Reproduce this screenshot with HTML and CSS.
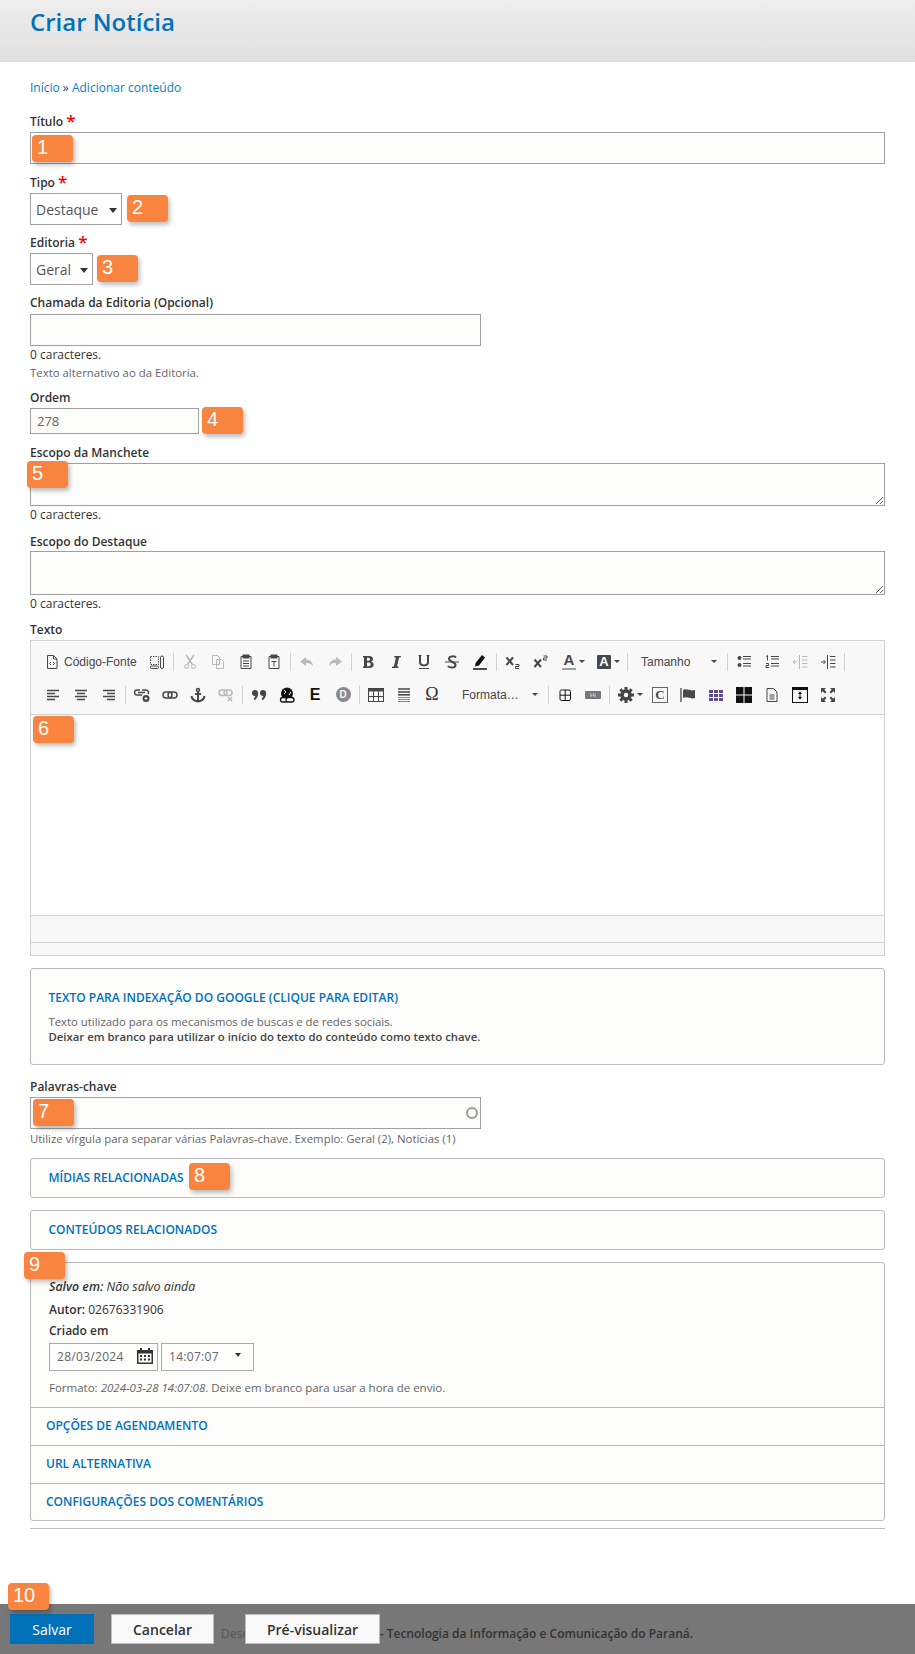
FILE: index.html
```html
<!DOCTYPE html>
<html>
<head>
	<meta charset="utf-8">
	<title>Criar Notícia</title>
	<link rel="stylesheet" href="styles.css">
</head>
<body>
	<header class="page-title"><h1>Criar Notícia</h1></header>

	<main class="content">
		<div class="breadcrumb"><a href="#">Início</a> » <a href="#">Adicionar conteúdo</a></div>

		<div class="field field-titulo">
			<label>Título <span class="req">*</span></label>
			<input type="text" class="text-full">
		</div>
		<div class="field field-tipo">
			<label>Tipo <span class="req">*</span></label>
			<div class="select-wrap"><select><option>Destaque</option></select></div>
		</div>
		<div class="field field-editoria">
			<label>Editoria <span class="req">*</span></label>
			<div class="select-wrap"><select><option>Geral</option></select></div>
		</div>
		<div class="field field-chamada">
			<label>Chamada da Editoria (Opcional)</label>
			<input type="text" class="text-half">
			<div class="count">0 caracteres.</div>
			<div class="help">Texto alternativo ao da Editoria.</div>
		</div>
		<div class="field field-ordem">
			<label>Ordem</label>
			<input type="text" class="text-order" value="278">
		</div>
		<div class="field field-manchete">
			<label>Escopo da Manchete</label>
			<textarea></textarea>
			<div class="count">0 caracteres.</div>
		</div>
		<div class="field field-destaque">
			<label>Escopo do Destaque</label>
			<textarea></textarea>
			<div class="count">0 caracteres.</div>
		</div>

		<div class="field field-texto">
			<label>Texto</label>
			<div class="editor">
				<div class="toolbar">
					<div class="tb-row">
						<span class="tb tb-source">
							<svg class="ico" viewBox="0 0 16 16"><path d="M3.500 1.500h6l3.500 3.500v9.500h-9.500zM9.500 1.500v3.500h3.500"/><path d="M7 8l-1.500 1.500 1.500 1.500M9 8l1.500 1.500-1.500 1.500"/></svg>
							Código-Fonte
						</span>
						<span class="tb"><svg class="ico" viewBox="0 0 16 16"><path stroke-dasharray="1.500 1" d="M1.500 2.500h8v8h-8z"/><rect x="1.500" y="12" width="8" height="2.500" rx="1"/><rect x="11.500" y="2" width="3" height="12.500" rx="1.500"/></svg></span>
						<span class="sep"></span>
						<span class="tb off"><svg class="ico" viewBox="0 0 16 16"><path stroke-width="1.500" d="M4 1l6.500 9.500M12 1l-6.500 9.500"/><circle cx="4.500" cy="12.500" r="2"/><circle cx="11.500" cy="12.500" r="2"/></svg></span>
						<span class="tb off"><svg class="ico" viewBox="0 0 16 16"><path d="M2.500 1.500h5l2 2v7h-7zM6.500 5.500h5l2 2v7h-7z"/></svg></span>
						<span class="tb"><svg class="ico" viewBox="0 0 16 16"><path d="M5 2.500h-2v12h10v-12h-2"/><rect x="5" y="1" width="6" height="3" fill="#474747"/><path d="M5 7h6M5 9.500h6M5 12h6"/></svg></span>
						<span class="tb"><svg class="ico" viewBox="0 0 16 16"><path d="M5 2.500h-2v12h10v-12h-2"/><rect x="5" y="1" width="6" height="3" fill="#474747"/><path d="M5.500 7.500h5M8 7.500v5"/></svg></span>
						<span class="sep"></span>
						<span class="tb off"><svg class="ico" viewBox="0 0 16 16"><path class="solid" d="M7 3l-6 4.500 6 4.500v-3c3 0 5 .5 7 3-.5-4-3-6.500-7-6.500z"/></svg></span>
						<span class="tb off"><svg class="ico" viewBox="0 0 16 16"><path class="solid" d="M9 3l6 4.500-6 4.500v-3c-3 0-5 .5-7 3 .5-4 3-6.500 7-6.500z"/></svg></span>
						<span class="sep"></span>
						<span class="tb"><svg class="ico" viewBox="0 0 16 16"><path class="solid" fill-rule="evenodd" d="M3 2h6c5 0 5 5 2 5.700 4 .8 3.500 6.300-1.500 6.300h-6.500v-1.500h1v-9h-1zM7 3.800v3h1.500c2 0 2-3 0-3zM7 8.600v3.600h2c2.300 0 2.300-3.600 0-3.600z"/></svg></span>
						<span class="tb"><svg class="ico" viewBox="0 0 16 16"><path class="solid" d="M6.500 2h6.500l-.3 1.500h-1.700l-2 9h1.700l-.3 1.500h-6.500l.3-1.500h1.700l2-9h-1.700z"/></svg></span>
						<span class="tb"><svg class="ico" viewBox="0 0 16 16"><path class="thick" d="M4 1.500v6.500c0 4.500 8 4.500 8 0v-6.500"/><path d="M2.500 1.500h3M10.500 1.500h3M3 14.500h10"/></svg></span>
						<span class="tb"><svg class="ico" viewBox="0 0 16 16"><path class="thick" d="M12 3.500c-1-1.500-7-2-7 1.500 0 3 6.500 2.500 6.500 6 0 3.500-6 3-7.500 1"/><path d="M1 8h14"/></svg></span>
						<span class="tb"><svg class="ico" viewBox="0 0 16 16"><path class="solid ink" d="M10 1l3 2.500-6 8-4 1 .7-3.700z"/><path d="M1 15h14" stroke-width="1.500" stroke="#111"/></svg></span>
						<span class="sep"></span>
						<span class="tb"><svg class="ico" viewBox="0 0 16 16"><path class="thick" d="M1.500 3.500l6.500 7.500M8 3.500l-6.500 7.500"/><path d="M10.500 10.500h3.500v2h-3.500v2h3.500"/></svg></span>
						<span class="tb"><svg class="ico" viewBox="0 0 16 16"><path class="thick" d="M1.500 5.500l6.500 7.500M8 5.500l-6.500 7.500"/><path d="M10.500 2h3.500v2h-3.500v2h3.500"/></svg></span>
						<span class="tb tb-drop"><span class="glyph-a">A</span><i class="arrow"></i></span>
						<span class="tb tb-drop"><span class="glyph-bg">A</span><i class="arrow"></i></span>
						<span class="sep"></span>
						<span class="combo combo-size">Tamanho<i class="arrow"></i></span>
						<span class="sep"></span>
						<span class="tb"><svg class="ico" viewBox="0 0 16 16"><circle class="solid" cx="3.500" cy="4" r="2"/><circle class="solid" cx="3.500" cy="11" r="2"/><path d="M7 2.500h8M7 5h8M7 9.500h8M7 12h8"/></svg></span>
						<span class="tb"><svg class="ico" viewBox="0 0 16 16"><path d="M2 2.500l1.500-1v5M2 9.500h2.500v2h-2.500v2h3M7 2.500h8M7 5h8M7 9.500h8M7 12h8"/></svg></span>
						<span class="tb off"><svg class="ico" viewBox="0 0 16 16"><path d="M1 8h4M3 6l-2 2 2 2M7.500 1v14M10 2.500h5.500M10 6h5.500M10 9.500h5.500M10 13h5.500"/></svg></span>
						<span class="tb"><svg class="ico" viewBox="0 0 16 16"><path d="M1 8h4M3.500 6l2 2-2 2M7.500 1v14M10 2.500h5.500M10 6h5.500M10 9.500h5.500M10 13h5.500"/></svg></span>
						<span class="sep"></span>
					</div>
					<div class="tb-row">
						<span class="tb"><svg class="ico" viewBox="0 0 16 16"><path d="M2 3.500h12M2 6.500h8M2 9.500h12M2 12.500h8" stroke-width="1.500"/></svg></span>
						<span class="tb"><svg class="ico" viewBox="0 0 16 16"><path d="M2 3.500h12M4 6.500h8M2 9.500h12M4 12.500h8" stroke-width="1.500"/></svg></span>
						<span class="tb"><svg class="ico" viewBox="0 0 16 16"><path d="M2 3.500h12M6 6.500h8M2 9.500h12M6 12.500h8" stroke-width="1.500"/></svg></span>
						<span class="sep"></span>
						<span class="tb"><svg class="ico" viewBox="0 0 16 16"><path d="M6 3h-3a2.500 2.500 0 0 0 0 5h5M4 5.500h7M8 3h4a2.500 2.500 0 0 1 2 4" stroke-width="1.500"/><circle class="solid" cx="12" cy="11.500" r="3.500"/><path d="M10.500 11.500h3M12 10v3" stroke="#fff"/></svg></span>
						<span class="tb"><svg class="ico" viewBox="0 0 16 16"><rect x="1" y="5" width="9" height="6" rx="3" stroke-width="1.500"/><rect x="6" y="5" width="9" height="6" rx="3" stroke-width="1.500"/></svg></span>
						<span class="tb"><svg class="ico" viewBox="0 0 16 16"><circle cx="8" cy="3" r="1.500" stroke-width="1.500"/><path class="thick" d="M8 4.500v10M5 7h6M1.500 9c.5 3.500 3 5 6.500 5.500 3.500-.5 6-2 6.500-5.500"/></svg></span>
						<span class="tb off"><svg class="ico" viewBox="0 0 16 16"><rect x="1" y="3" width="8" height="5.500" rx="2.700" stroke-width="1.500"/><rect x="6" y="3" width="8" height="5.500" rx="2.700" stroke-width="1.500"/><path d="M10 10l4 4M14 10l-4 4" stroke-width="1.500"/></svg></span>
						<span class="sep"></span>
						<span class="tb"><svg class="ico" viewBox="0 0 16 16"><circle class="solid" cx="4" cy="6" r="3"/><path class="thick" d="M6.200 6c0 3-1.200 5-3 6.500"/><circle class="solid" cx="12" cy="6" r="3"/><path class="thick" d="M14.200 6c0 3-1.200 5-3 6.500"/></svg></span>
						<span class="tb"><svg class="ico ico-black" viewBox="0 0 16 16"><circle class="solid" cx="8" cy="6.500" r="6"/><path d="M5 3l2 2-2 2M10 8l2-3" stroke="#fff"/><rect x="1.500" y="10.500" width="7" height="4.500" rx="2.200" fill="#fff" stroke-width="1.300"/><rect x="7" y="10.500" width="8" height="4.500" rx="2.200" fill="#fff" stroke-width="1.300"/></svg></span>
						<span class="tb tb-letter">E</span>
						<span class="tb"><span class="glyph-d">D</span></span>
						<span class="sep"></span>
						<span class="tb"><svg class="ico" viewBox="0 0 16 16"><rect x=".5" y="1.500" width="15" height="13"/><path class="solid" d="M.5 1.500h15v3h-15z"/><path d="M.5 9.500h15M5.500 4.500v10M10.500 4.500v10"/></svg></span>
						<span class="tb"><svg class="ico" viewBox="0 0 16 16"><path d="M2 2h12M2 5h12" stroke-width="1.300"/><path d="M2 7.800h12" stroke-width="1.600"/><path d="M2 10.500h12M2 12.500h12M2 14.500h12" opacity=".6"/></svg></span>
						<span class="tb tb-omega">Ω</span>
						<span class="combo combo-format">Formata…<i class="arrow"></i></span>
						<span class="sep"></span>
						<span class="tb"><svg class="ico ico-black" viewBox="0 0 16 16"><rect x="3" y="3" width="10.500" height="10.500" rx="1.500"/><path d="M3 8.200h10.500M8.200 3v10.500"/></svg></span>
						<span class="tb"><span class="glyph-hi">Hi</span></span>
						<span class="sep"></span>
						<span class="tb tb-drop tb-gear"><svg class="ico" viewBox="0 0 16 16"><circle cx="8" cy="8" r="4" stroke-width="3.500"/><path stroke-width="3" d="M8 0v3M8 13v3M0 8h3M13 8h3M2.300 2.300l2.200 2.200M11.500 11.500l2.200 2.200M2.300 13.700l2.200-2.200M11.500 4.500l2.200-2.200"/></svg><i class="arrow"></i></span>
						<span class="tb"><span class="glyph-c">C</span></span>
						<span class="tb"><svg class="ico" viewBox="0 0 16 16"><path d="M1 1v14" stroke-width="1.300"/><path class="solid" d="M3 3c4-2 6 1.500 12 0v8c-5 1.500-8-2-12 0z"/></svg></span>
						<span class="tb"><svg class="ico ico-purple" viewBox="0 0 16 16"><path d="M1 3h4v3h-4zM6 3h4v3h-4zM11 3h4v3h-4zM1 7h4v3h-4zM6 7h4v3h-4zM11 7h4v3h-4zM1 11h4v3h-4zM6 11h4v3h-4zM11 11h4v3h-4z"/></svg></span>
						<span class="tb"><svg class="ico ico-black" viewBox="0 0 16 16"><path class="solid" d="M0 0h7.500v7.500h-7.500zM8.500 0h7.500v7.500h-7.500zM0 8.500h7.500v7.500h-7.500zM8.500 8.500h7.500v7.500h-7.500z"/></svg></span>
						<span class="tb"><svg class="ico" viewBox="0 0 16 16"><path d="M3 1.500h6.500l3.500 3.500v9.500h-10zM5.500 8h5M5.500 10h5M5.500 12h5"/></svg></span>
						<span class="tb"><svg class="ico ico-black" viewBox="0 0 16 16"><rect x=".5" y=".5" width="15" height="15"/><path class="solid" d="M0 0h16v3h-16z"/><path d="M8 5v6.500"/><path class="solid" d="M6 7l2-2.500 2 2.500zM6 10l2 2.500 2-2.500z"/></svg></span>
						<span class="tb"><svg class="ico" viewBox="0 0 16 16"><path class="solid" d="M1 1h5l-1.700 1.700 2.200 2.200-1.600 1.600-2.200-2.200-1.700 1.700zM15 1v5l-1.700-1.700-2.200 2.200-1.600-1.600 2.200-2.200-1.700-1.700zM1 15v-5l1.700 1.700 2.200-2.200 1.600 1.600-2.200 2.200 1.700 1.700zM15 15h-5l1.700-1.700-2.200-2.200 1.600-1.600 2.200 2.200 1.700-1.700z"/></svg></span>
					</div>
				</div>
				<div class="editor-body"></div>
				<div class="editor-path"></div>
				<div class="editor-foot"></div>
			</div>
		</div>

		<section class="panel panel-google">
			<h2>Texto para indexação do Google (clique para editar)</h2>
			<p>Texto utilizado para os mecanismos de buscas e de redes sociais.<br><strong>Deixar em branco para utilizar o início do texto do conteúdo como texto chave.</strong></p>
		</section>

		<div class="field field-palavras">
			<label>Palavras-chave</label>
			<div class="autocomplete"><input type="text" class="text-half"><i class="throbber"></i></div>
			<div class="help">Utilize vírgula para separar várias Palavras-chave. Exemplo: Geral (2), Notícias (1)</div>
		</div>

		<section class="panel panel-row"><h2>Mídias relacionadas</h2></section>
		<section class="panel panel-row"><h2>Conteúdos relacionados</h2></section>

		<section class="panel panel-meta">
			<div class="meta-top">
				<div class="meta-saved"><em><strong>Salvo em:</strong> Não salvo ainda</em></div>
				<div class="meta-author"><strong>Autor:</strong> 02676331906</div>
				<div class="meta-label">Criado em</div>
				<div class="date-row">
					<div class="date-box">28/03/2024
						<svg class="cal" viewBox="0 0 16 16"><path fill="#333" fill-rule="evenodd" d="M3 0h2v2h6v-2h2v2h3v14h-16v-14h3zM1.500 5.500v9h13v-9zM3 7h2v2h-2zM7 7h2v2h-2zM11 7h2v2h-2zM3 10.500h2v2h-2zM7 10.500h2v2h-2zM11 10.500h2v2h-2z"/></svg>
					</div>
					<div class="time-box">14:07:07<i class="time-arrow"></i></div>
				</div>
				<div class="help meta-help">Formato: <em>2024-03-28 14:07:08</em>. Deixe em branco para usar a hora de envio.</div>
			</div>
			<h3>Opções de agendamento</h3>
			<h3>URL alternativa</h3>
			<h3>Configurações dos comentários</h3>
		</section>
		<hr class="rule">
	</main>

	<footer class="actions">
		<button class="btn btn-save">Salvar</button>
		<button class="btn btn-cancel">Cancelar</button>
		<div class="foot-text">Desenvolvido pela <strong>CELEPAR - Tecnologia da Informação e Comunicação do Paraná.</strong></div>
		<button class="btn btn-preview">Pré-visualizar</button>
	</footer>

	<div class="badge badge-1">1</div>
	<div class="badge badge-2">2</div>
	<div class="badge badge-3">3</div>
	<div class="badge badge-4">4</div>
	<div class="badge badge-5">5</div>
	<div class="badge badge-6">6</div>
	<div class="badge badge-7">7</div>
	<div class="badge badge-8">8</div>
	<div class="badge badge-9">9</div>
	<div class="badge badge-10">10</div>
</body>
</html>
```
FILE: styles.css
```css
html, body {
	margin: 0;
	padding: 0;
}
body {
	position: relative;
	display: flex;
	flex-direction: column;
	min-height: 100vh;
	font-family: "Open Sans", sans-serif;
	font-size: 13px;
	line-height: 18px;
	color: #333;
	background: #fff;
}
a {
	color: #0a7cc1;
	text-decoration: none;
}
.page-title {
	height: 62px;
	padding: 0 30px;
	box-sizing: border-box;
	background: linear-gradient(#eeeeee, #e0e0e0);
}
.page-title h1 {
	margin: 0;
	padding-top: 4px;
	font-size: 24px;
	line-height: 36px;
	font-weight: 600;
	color: #0072bc;
}
.content {
	padding: 0 30px;
}
.breadcrumb {
	margin-top: 17px;
	margin-bottom: 15px;
	font-size: 12px;
	color: #444;
}

/* form fields */
.field {
	margin-bottom: 8px;
}
.field label {
	display: block;
	height: 18px;
	margin-bottom: 2px;
	font-size: 12px;
	line-height: 20px;
	font-weight: 600;
	color: #333;
}
.req {
	color: #f00;
	font-size: 17px;
	line-height: 12px;
	vertical-align: -1px;
}
.field-titulo {
	margin-bottom: 9px;
}
.field-chamada label {
	margin-bottom: 3px;
}
.field-chamada {
	margin-bottom: 7px;
}
.field-ordem {
	margin-bottom: 9px;
}
.field-manchete textarea {
	height: 43px;
}
.field-destaque {
	margin-bottom: 7px;
}
.field-destaque label {
	margin-bottom: 1px;
}
input[type="text"], textarea {
	display: block;
	box-sizing: border-box;
	margin: 0;
	padding: 0 6px;
	border: 1px solid #a0a0a0;
	background: #fcfcfa;
	font-family: inherit;
	font-size: 13px;
	color: #666;
	border-radius: 0;
	outline: none;
}
.text-full {
	width: 855px;
	height: 32px;
}
.text-half {
	width: 451px;
	height: 32px;
}
.text-order {
	width: 169px;
	height: 26px;
}
textarea {
	width: 855px;
	height: 44px;
}
.select-wrap {
	position: relative;
	width: fit-content;
}
.select-wrap::after {
	content: "";
	position: absolute;
	right: 5px;
	top: 15px;
	border-style: solid;
	border-width: 5px 4px 0 4px;
	border-color: #333 transparent transparent transparent;
}
select {
	display: block;
	appearance: none;
	height: 32px;
	margin: 0;
	padding: 0 0 0 5px;
	border: 1px solid #a0a0a0;
	border-radius: 0;
	background: #fff;
	font-family: inherit;
	font-size: 14px;
	color: #555;
}
.field-tipo select {
	width: 92px;
}
.field-editoria select {
	width: 63px;
}
.count {
	color: #333;
	font-size: 12px;
	height: 18px;
}
.field-chamada .count {
	height: 17px;
}
.help {
	font-size: 11.4px;
	color: #666;
	line-height: 16px;
	margin-top: 2px;
}

/* editor */
.editor {
	border: 1px solid #d1d1d1;
	background: #fff;
}
.toolbar {
	height: 74px;
	box-sizing: border-box;
	padding: 4px 0 0 8px;
	background: #f8f8f8;
	border-bottom: 1px solid #d1d1d1;
}
.tb-row {
	display: flex;
	align-items: center;
	height: 33px;
	color: #474747;
}
.tb {
	display: flex;
	align-items: center;
	justify-content: center;
	width: 28px;
	height: 28px;
	flex: none;
}
.tb.off {
	opacity: .35;
}
.tb-source {
	width: 104px;
	justify-content: flex-start;
	padding-left: 5px;
	box-sizing: border-box;
	gap: 4px;
	font: 12px "Liberation Sans", Arial, sans-serif;
}
.tb-drop {
	width: 35px;
	justify-content: flex-start;
	padding-left: 7px;
	box-sizing: border-box;
}
.tb-gear {
	width: 34px;
	padding-left: 6px;
}
.ico {
	width: 16px;
	height: 16px;
	fill: none;
	stroke: #474747;
	stroke-width: 1;
	flex: none;
}
.ico .solid {
	fill: #474747;
	stroke: none;
}
.ico .ink {
	fill: #111;
}
.ico .thick {
	stroke-width: 2;
}
.ico-black {
	stroke: #111;
}
.ico-black .solid {
	fill: #111;
}
.ico-purple {
	fill: #5f4b8b;
	stroke: none;
}
.sep {
	flex: none;
	width: 1px;
	height: 18px;
	margin: 0 2px;
	background: #d1d1d1;
}
.arrow {
	display: block;
	flex: none;
	margin-left: 3px;
	border-style: solid;
	border-width: 3px 3px 0 3px;
	border-color: #474747 transparent transparent transparent;
}
.combo {
	display: flex;
	align-items: center;
	justify-content: space-between;
	flex: none;
	box-sizing: border-box;
	font: 12px "Liberation Sans", Arial, sans-serif;
	color: #474747;
}
.combo-size {
	width: 95px;
	padding: 0 8px 0 11px;
}
.combo-format {
	width: 100px;
	padding: 0 8px 0 16px;
}
.glyph-a {
	display: block;
	width: 14px;
	height: 15px;
	font: bold 15px/14px "Liberation Sans", Arial, sans-serif;
	text-align: center;
	border-bottom: 2px solid #a0a0a0;
	color: #474747;
}
.glyph-bg {
	display: block;
	width: 14px;
	height: 14px;
	font: bold 13px/14px "Liberation Sans", Arial, sans-serif;
	text-align: center;
	color: #fff;
	background: #474747;
	border-radius: 1px;
}
.tb-letter {
	font: bold 16px "Liberation Sans", Arial, sans-serif;
	color: #111;
}
.glyph-d {
	display: block;
	width: 15px;
	height: 15px;
	border-radius: 50%;
	background: #8a8a8a;
	color: #f8f8f8;
	font: bold 10px/15px "Liberation Sans", Arial, sans-serif;
	text-align: center;
}
.tb-omega {
	font: 18px "Liberation Serif", serif;
	color: #333;
}
.glyph-hi {
	display: block;
	width: 16px;
	height: 8px;
	background: #777;
	color: #ccc;
	font: bold 6px/8px "Liberation Sans", Arial, sans-serif;
	text-align: center;
	border-radius: 1px;
}
.glyph-c {
	display: block;
	box-sizing: border-box;
	width: 16px;
	height: 16px;
	border: 1px solid #666;
	font: bold 13px/14px "Liberation Serif", serif;
	text-align: center;
	color: #474747;
}
.editor-body {
	height: 200px;
	background: #fff;
}
.editor-path {
	height: 27px;
	background: #f8f8f8;
	border-top: 1px solid #d1d1d1;
	box-sizing: border-box;
}
.editor-foot {
	height: 13px;
	background: #f8f8f8;
	border-top: 1px solid #d1d1d1;
	box-sizing: border-box;
}

/* panels */
.panel {
	border: 1px solid #bbb;
	border-radius: 3px;
	background: #fcfcfa;
	margin: 12px 0;
}
.panel h2, .panel h3 {
	margin: 0;
	font-size: 12px;
	line-height: 18px;
	font-weight: 600;
	color: #0072bc;
	text-transform: uppercase;
}
.panel-google {
	box-sizing: border-box;
	height: 97px;
	padding: 20px 17.5px 0;
}
.panel-google p {
	margin: 7px 0 0;
	font-size: 11.35px;
	line-height: 15px;
	color: #666;
}
.panel-google strong {
	color: #444;
	font-weight: 600;
}
.panel-row {
	box-sizing: border-box;
	height: 40px;
	padding: 10px 17.5px 0;
}
.autocomplete {
	position: relative;
	width: 451px;
}
.throbber {
	position: absolute;
	right: 3px;
	top: 10px;
	width: 12px;
	height: 12px;
	box-sizing: border-box;
	border: 2px solid #999;
	border-radius: 50%;
}
.field-palavras {
	margin-top: 11px;
}
.field-palavras .help {
	line-height: 15px;
}
.panel-meta {
	margin-bottom: 0;
	height: 259px;
	box-sizing: border-box;
}
.meta-top {
	height: 144px;
	box-sizing: border-box;
	padding: 15px 18px 0;
	font-size: 12px;
}
.meta-top strong {
	font-weight: 600;
}
.meta-saved {
	font-size: 12.4px;
}
.meta-author {
	margin-top: 5px;
}
.meta-label {
	margin-top: 3px;
	font-weight: 600;
	font-size: 12px;
}
.date-row {
	display: flex;
	gap: 3px;
	margin-top: 3px;
}
.date-box, .time-box {
	position: relative;
	box-sizing: border-box;
	height: 28px;
	border: 1px solid #aaa;
	padding-left: 7px;
	font-size: 12px;
	line-height: 26px;
	color: #666;
	letter-spacing: .3px;
}
.date-box {
	width: 109px;
}
.time-box {
	width: 93px;
}
.cal {
	position: absolute;
	right: 4px;
	top: 3px;
	width: 16px;
	height: 18px;
}
.time-arrow {
	position: absolute;
	right: 12px;
	top: 9px;
	border-style: solid;
	border-width: 4px 3.500px 0 3.500px;
	border-color: #333 transparent transparent transparent;
}
.meta-help {
	margin-top: 9px;
	font-size: 11.5px;
}
.panel h3 {
	height: 38px;
	box-sizing: border-box;
	padding: 9px 15px 0;
	border-top: 1px solid #bbb;
}
.rule {
	margin: 7px 0 0;
	border: 0;
	border-top: 1px solid #bbb;
}

/* footer bar */
.actions {
	position: relative;
	display: flex;
	align-items: flex-start;
	margin-top: auto;
	box-sizing: border-box;
	height: 50px;
	padding: 10px 0 0 10px;
	background: #777;
}
.btn {
	box-sizing: border-box;
	height: 30px;
	margin: 0;
	border: 1px solid #bbb;
	border-radius: 0;
	background: #f9f9f9;
	font-family: inherit;
	font-size: 14px;
	font-weight: 600;
	color: #333;
}
.btn-save {
	width: 84px;
	border: 0;
	background: #0071b9;
	color: #fff;
	font-weight: 400;
}
.btn-cancel {
	width: 103px;
	margin-left: 17px;
}
.btn-preview {
	position: absolute;
	left: 245px;
	top: 10px;
	width: 135px;
}
.foot-text {
	margin-left: 7px;
	padding-top: 11px;
	font-size: 12px;
	color: #555;
	white-space: nowrap;
}
.foot-text strong {
	font-weight: 600;
	color: #333;
}

/* numbered callouts over the screenshot */
.badge {
	position: absolute;
	width: 41px;
	height: 27px;
	box-sizing: border-box;
	padding-left: 5px;
	border-radius: 4px;
	background: #f9843f;
	box-shadow: 2px 3px 4px rgba(0, 0, 0, .25);
	font: 20px/24px "Liberation Sans", Arial, sans-serif;
	color: #fff;
}
.badge-1 { left: 32px; top: 135px; }
.badge-2 { left: 127px; top: 195px; }
.badge-3 { left: 97px; top: 255px; }
.badge-4 { left: 202px; top: 407px; }
.badge-5 { left: 27px; top: 461px; }
.badge-6 { left: 33px; top: 716px; }
.badge-7 { left: 33px; top: 1099px; }
.badge-8 { left: 189px; top: 1163px; }
.badge-9 { left: 24px; top: 1252px; }
.badge-10 { left: 8px; top: 1583px; }
```
